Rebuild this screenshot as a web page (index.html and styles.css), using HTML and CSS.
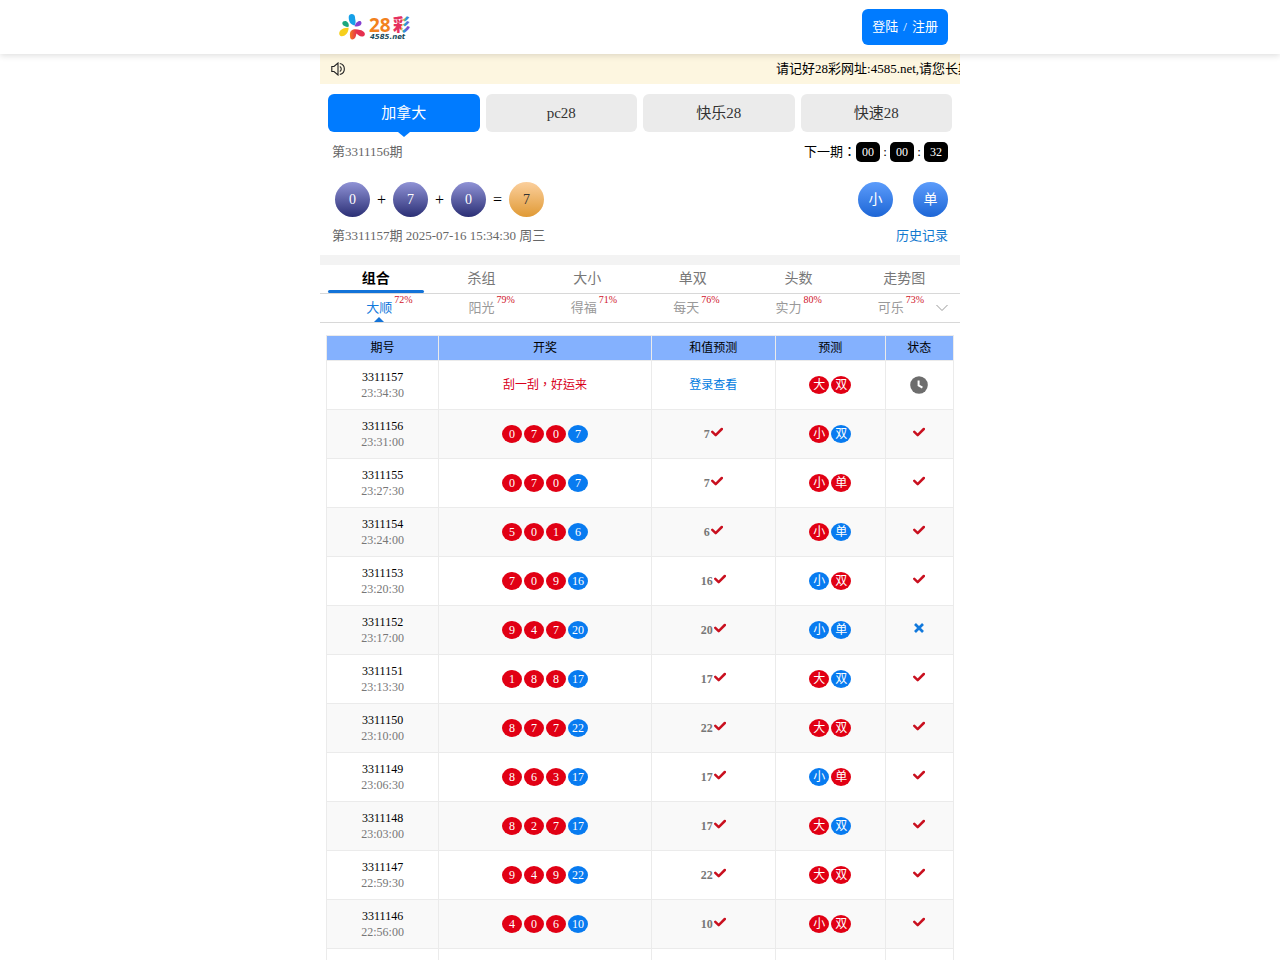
FILE: index.html
```html
<!DOCTYPE html>
<html lang="zh-CN">
<head>
    <meta charset="UTF-8">
    <meta name="viewport" content="width=device-width, initial-scale=1.0">
    <title>28彩</title>
    <link rel="stylesheet" href="styles.css">
</head>
<body>
    <svg class="sprite" aria-hidden="true">
        <symbol id="icon-check" viewBox="0 0 12 10">
            <path d="M1.3 4.8 L4.7 8.1 L10.8 2" fill="none" stroke="currentColor" stroke-width="2.5" stroke-linecap="round" stroke-linejoin="round"/>
        </symbol>
        <symbol id="icon-cross" viewBox="0 0 12 10">
            <path d="M2 1 L10 9 M10 1 L2 9" fill="none" stroke="currentColor" stroke-width="2.7"/>
        </symbol>
        <symbol id="icon-clock" viewBox="0 0 18 18">
            <circle cx="9" cy="9" r="8.8" fill="currentColor"/>
            <path d="M8.6 4.4 V9.4 L12.4 11.6" fill="none" stroke="#fff" stroke-width="2"/>
        </symbol>
    </svg>

    <header class="header">
        <div class="header-inner">
            <a class="logo" href="#" aria-label="28彩">
                <svg width="76" height="30" viewBox="0 0 76 30">
                    <defs>
                        <linearGradient id="hot" x1="0" x2="1"><stop offset="0" stop-color="#f47b20"/><stop offset="0.45" stop-color="#e5304f"/></linearGradient>
                        <linearGradient id="word" x1="0" x2="1" y1="0" y2="0.3"><stop offset="0.6" stop-color="#e5305f"/><stop offset="0.64" stop-color="#f6a81c"/><stop offset="0.8" stop-color="#1aa5dc"/><stop offset="1" stop-color="#8a3ec8"/></linearGradient>
                    </defs>
                    <path d="M10.7 5 C10.7 1 16.8 1 17 5 C17 8 18.6 10 16.6 13.6 C12 12.5 10.7 9 10.7 5Z" fill="#16a0e8"/>
                    <path d="M16.6 14.2 C17.4 11 20 8.4 22.4 9 C25 11 23 15.4 16.6 14.2Z" fill="#8440cf"/>
                    <path d="M5 9.6 C8 7.6 11.6 10.6 10.6 14.8 C7 15.6 2.6 12.6 5 9.6Z" fill="#1ba77e"/>
                    <path d="M10.6 15.8 C10.6 20 8 24.4 3.4 24.2 C-0.6 23.4 0.4 15.4 10.6 15.8Z" fill="#f6cf1d"/>
                    <path d="M12 24 C11 17 17 16.6 22 18 C26 18.6 28.4 22 26 24 C23 25.4 20.4 23.6 18.4 21.6 C17.6 26 16.6 27.6 14 27.4 C12.4 27 12 25.6 12 24Z" fill="url(#hot)"/>
                    <text class="logo-number" x="31" y="20">28</text>
                    <text class="logo-word" x="55" y="19">彩</text>
                    <text class="logo-site" x="32" y="27">4585.net</text>
                </svg>
            </a>
            <button type="button" class="login-btn"><span>登陆</span><span>/</span><span>注册</span></button>
        </div>
    </header>

    <main class="container">
        <div class="notice">
            <svg width="14" height="14" viewBox="0 0 14 14" fill="none" stroke="#222" stroke-width="1.1">
                <path d="M0.8 4.5 H3 L7 1 V13 L3 9.5 H0.8Z"/>
                <path d="M8.8 4.6 A2.7 2.7 0 0 1 8.8 9.4 M8.8 1.5 A5.6 5.6 0 0 1 8.8 12.5"/>
            </svg>
            <div class="notice-track"><p class="notice-text">请记好28彩网址:4585.net,请您长期收藏</p></div>
        </div>

        <nav class="game-tabs">
            <button type="button" class="game-tab active">加拿大</button>
            <button type="button" class="game-tab">pc28</button>
            <button type="button" class="game-tab">快乐28</button>
            <button type="button" class="game-tab">快速28</button>
        </nav>

        <section class="draw">
            <div class="draw-row">
                <span class="muted">第3311156期</span>
                <div class="countdown">
                    <span class="cjk-tc" lang="zh-TW">下一期：</span>
                    <b>00</b><i>:</i><b>00</b><i>:</i><b>32</b>
                </div>
            </div>
            <div class="draw-result">
                <div class="sum">
                    <span class="ball">0</span><i>+</i>
                    <span class="ball">7</span><i>+</i>
                    <span class="ball">0</span><i>=</i>
                    <span class="ball total">7</span>
                </div>
                <div class="tags"><span class="ball tag">小</span><span class="ball tag">单</span></div>
            </div>
            <div class="draw-row">
                <span class="muted">第3311157期 2025-07-16 15:34:30 周三</span>
                <a class="history" href="#">历史记录</a>
            </div>
        </section>

        <nav class="type-tabs">
            <a href="#" class="type-tab active">组合</a>
            <a href="#" class="type-tab">杀组</a>
            <a href="#" class="type-tab">大小</a>
            <a href="#" class="type-tab">单双</a>
            <a href="#" class="type-tab">头数</a>
            <a href="#" class="type-tab">走势图</a>
        </nav>

        <nav class="plan-tabs">
            <a href="#" class="plan-tab active"><span>大顺<sup>72%</sup></span></a>
            <a href="#" class="plan-tab"><span>阳光<sup>79%</sup></span></a>
            <a href="#" class="plan-tab"><span>得福<sup>71%</sup></span></a>
            <a href="#" class="plan-tab"><span>每天<sup>76%</sup></span></a>
            <a href="#" class="plan-tab"><span>实力<sup>80%</sup></span></a>
            <a href="#" class="plan-tab"><span>可乐<sup>73%</sup></span></a>
            <button type="button" class="plan-more" aria-label="更多">
                <svg width="12" height="8" viewBox="0 0 12 8"><path d="M0.5 1 L6 6.5 L11.5 1" fill="none" stroke="#999"/></svg>
            </button>
        </nav>

        <table class="records">
            <thead>
                <tr>
                    <th class="col-issue">期号</th>
                    <th class="col-open">开奖</th>
                    <th class="col-sum">和值预测</th>
                    <th class="col-guess">预测</th>
                    <th class="col-state">状态</th>
                </tr>
            </thead>
            <tbody id="records">
                <tr>
                    <td>3311157<span class="time">23:34:30</span></td>
                    <td><span class="scratch cjk-tc" lang="zh-TW">刮一刮，好运来</span></td>
                    <td><a class="view" href="#">登录查看</a></td>
                    <td><div class="dots"><span class="dot">大</span><span class="dot">双</span></div></td>
                    <td><svg class="clock" width="18" height="18"><use href="#icon-clock"/></svg></td>
                </tr>
            </tbody>
        </table>
    </main>

    <script>
        // 期号, 时间, 开奖号码, 和值, 预测, 预测颜色(r红 b蓝), 是否命中
        const records = [
            ['3311156', '23:31:00', '070', 7, '小双', 'rb', true],
            ['3311155', '23:27:30', '070', 7, '小单', 'rr', true],
            ['3311154', '23:24:00', '501', 6, '小单', 'rb', true],
            ['3311153', '23:20:30', '709', 16, '小双', 'br', true],
            ['3311152', '23:17:00', '947', 20, '小单', 'bb', false],
            ['3311151', '23:13:30', '188', 17, '大双', 'rb', true],
            ['3311150', '23:10:00', '877', 22, '大双', 'rr', true],
            ['3311149', '23:06:30', '863', 17, '小单', 'br', true],
            ['3311148', '23:03:00', '827', 17, '大双', 'rb', true],
            ['3311147', '22:59:30', '949', 22, '大双', 'rr', true],
            ['3311146', '22:56:00', '406', 10, '小双', 'rr', true],
            ['3311145', '22:52:30', '385', 16, '大双', 'rr', true]
        ];

        const dot = (text, blue) => `<span class="dot${blue ? ' blue' : ''}">${text}</span>`;
        const mark = (hit) => `<svg class="mark${hit ? '' : ' miss'}" width="12" height="10"><use href="#icon-${hit ? 'check' : 'cross'}"/></svg>`;

        const rows = records.map(([issue, time, nums, sum, guess, colors, hit]) => `
            <tr>
                <td>${issue}<span class="time">${time}</span></td>
                <td><div class="dots">${[...nums].map(n => dot(n)).join('')}${dot(sum, true)}</div></td>
                <td><div class="result">${sum}${mark(true)}</div></td>
                <td><div class="dots">${[...guess].map((g, i) => dot(g, colors[i] === 'b')).join('')}</div></td>
                <td><div class="result">${mark(hit)}</div></td>
            </tr>
        `);
        document.getElementById('records').insertAdjacentHTML('beforeend', rows.join(''));
    </script>
</body>
</html>
```

FILE: styles.css
```css
* {
    box-sizing: border-box;
}
body {
    margin: 0;
    font-family: "Liberation Serif", "Noto Sans CJK SC", serif;
    font-size: 13px;
    line-height: 20px;
    color: #000;
    background: #fff;
}
a {
    text-decoration: none;
}
button {
    border: none;
    font: inherit;
    cursor: pointer;
}
i {
    font-style: normal;
}
.sprite {
    display: none;
}
.cjk-tc {
    font-family: "Liberation Serif", "Noto Sans CJK TC", serif;
}

/* 顶部 */
.header {
    position: relative;
    background: #fff;
    box-shadow: 0 2px 6px rgba(0,0,0,0.12);
}
.header-inner {
    display: flex;
    justify-content: space-between;
    align-items: center;
    max-width: 640px;
    height: 54px;
    margin: 0 auto;
    padding: 0 12px 0 18px;
}
.logo svg {
    display: block;
}
.logo-number {
    font: bold 19px "Open Sans", sans-serif;
    fill: #f2811d;
}
.logo-word {
    font: 900 17px "Noto Sans CJK SC", sans-serif;
    fill: url(#word);
}
.logo-site {
    font: italic bold 7px "DejaVu Sans", sans-serif;
    fill: #174a5c;
}
.login-btn {
    display: flex;
    align-items: center;
    gap: 5px;
    height: 36px;
    padding: 0 10px;
    border-radius: 6px;
    background: #007bff;
    color: #fff;
}

.container {
    max-width: 640px;
    margin: 0 auto;
}
.notice {
    display: flex;
    align-items: center;
    gap: 2px;
    height: 30px;
    padding-left: 11px;
    background: #fdf6e0;
}
.notice-track {
    flex: 1;
    min-width: 0;
    overflow: hidden;
}
.notice-text {
    margin: 0;
    padding-left: 70%;
    white-space: nowrap;
}

/* 彩种 */
.game-tabs {
    display: flex;
    gap: 6px;
    padding: 10px 8px 0;
}
.game-tab {
    position: relative;
    flex: 1;
    height: 38px;
    border-radius: 6px;
    background: #ebebeb;
    color: #333;
    font-size: 15px;
}
.game-tab.active {
    background: #007bff;
    color: #fff;
}
.game-tab.active::after {
    content: "";
    position: absolute;
    top: 100%;
    left: 50%;
    margin-left: -6px;
    border: 6px solid transparent;
    border-top: 5px solid #007bff;
    border-bottom: none;
}

/* 开奖信息 */
.draw {
    padding: 0 12px;
    border-bottom: 10px solid #f3f3f3;
}
.draw-row {
    display: flex;
    justify-content: space-between;
    align-items: center;
    height: 40px;
}
.draw-row:last-child {
    height: 38px;
}
.muted {
    color: #666;
}
.history {
    color: #1279cf;
}
.countdown {
    display: flex;
    align-items: center;
}
.countdown b {
    width: 24px;
    border-radius: 5px;
    background: #000;
    color: #fff;
    font-size: 12px;
    font-weight: normal;
    text-align: center;
}
.countdown i {
    width: 10px;
    text-align: center;
}
.draw-result {
    display: flex;
    justify-content: space-between;
    padding: 10px 0 0 3px;
}
.sum,
.tags {
    display: flex;
    align-items: center;
}
.tags {
    gap: 20px;
}
.sum i {
    width: 23px;
    font-size: 16px;
    text-align: center;
}
.ball {
    width: 35px;
    border-radius: 50%;
    background: linear-gradient(#9093d6, #2b2f75);
    color: #fff;
    font-size: 14px;
    line-height: 35px;
    text-align: center;
}
.ball.total {
    background: linear-gradient(#fbcf9d, #e09a35);
    color: #333;
}
.ball.tag {
    background: linear-gradient(#5c9cfb, #1d66d6);
}

/* 玩法 */
.type-tabs {
    display: flex;
    padding: 0 3px;
    border-bottom: 1px solid #d8d8d8;
}
.type-tab {
    position: relative;
    flex: 1;
    color: #777;
    font-size: 14px;
    line-height: 28px;
    text-align: center;
}
.type-tab.active {
    color: #000;
    font-weight: bold;
}
.type-tab.active::after {
    content: "";
    position: absolute;
    right: 5px;
    bottom: 0;
    left: 5px;
    height: 3px;
    border-radius: 2px;
    background: #1373d8;
}
.plan-tabs {
    position: relative;
    display: flex;
    padding: 0 18px 0 8px;
    border-bottom: 1px solid #d8d8d8;
}
.plan-tab {
    position: relative;
    flex: 1;
    color: #999;
    line-height: 28px;
    text-align: center;
}
.plan-tab span {
    position: relative;
}
.plan-tab sup {
    position: absolute;
    top: -5px;
    left: 100%;
    margin-left: 2px;
    color: #d0142a;
    font-size: 10px;
    line-height: 1;
}
.plan-tab.active {
    color: #1279dc;
}
.plan-tab.active::after {
    content: "";
    position: absolute;
    bottom: 0;
    left: 50%;
    margin-left: -5px;
    border: 5px solid transparent;
    border-top: none;
    border-bottom-color: #1373d8;
}
.plan-more {
    position: absolute;
    top: 0;
    right: 12px;
    height: 28px;
    padding: 0;
    background: none;
}
.plan-more svg {
    display: block;
}

/* 预测记录 */
.records {
    width: calc(100% - 12px);
    margin: 12px 6px 0;
    border-collapse: collapse;
    table-layout: fixed;
    font-size: 12px;
    line-height: 16px;
    text-align: center;
}
.records th,
.records td {
    padding: 0;
    border: 1px solid #ebebeb;
}
.records th {
    height: 25px;
    background: #84b1fe;
    font-weight: normal;
}
.records td {
    height: 49px;
}
.records tr:nth-child(even) td {
    background: #f9f9f9;
}
.col-issue { width: 17.9%; }
.col-open { width: 33.9%; }
.col-sum { width: 19.8%; }
.col-guess { width: 17.5%; }
.col-state { width: 10.9%; }
.time {
    display: block;
    color: #777;
}
.scratch {
    color: #d9001b;
}
.view {
    color: #007bdf;
}
.dots {
    display: flex;
    justify-content: center;
    gap: 2px;
}
.dot {
    width: 20px;
    border-radius: 50%;
    background: #e10014;
    color: #fff;
    line-height: 18px;
}
.dot.blue {
    background: #087bf0;
}
.result {
    display: flex;
    justify-content: center;
    gap: 1px;
    height: 16px;
    color: #777;
    font-weight: bold;
}
.mark {
    margin-top: 1px;
    color: #c9101f;
}
.mark.miss {
    color: #1279dc;
}
.clock {
    display: block;
    margin: 0 auto;
    color: #6d6d6d;
}
```
